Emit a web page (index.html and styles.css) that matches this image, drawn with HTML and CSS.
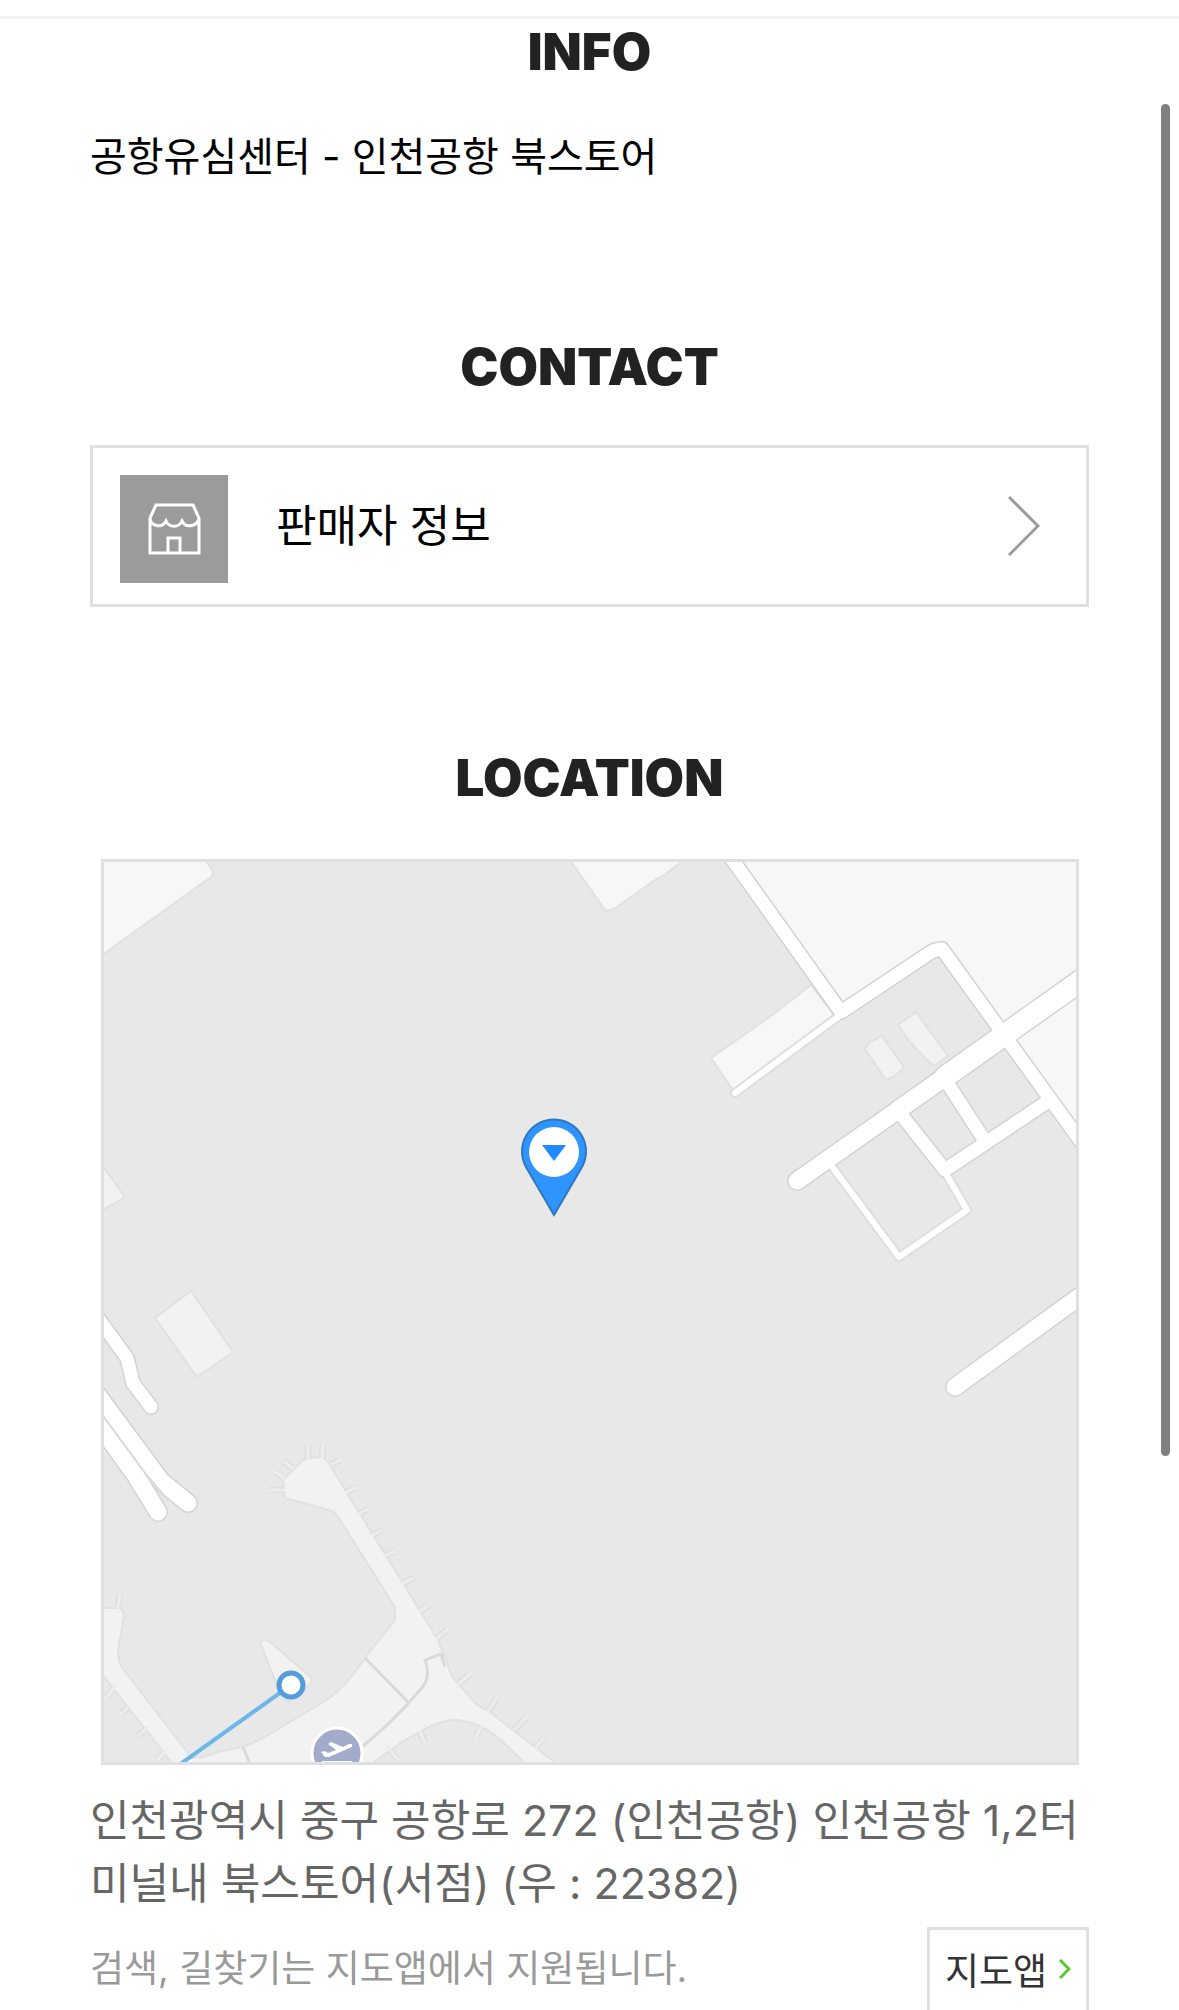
FILE: index.html
```html
<!DOCTYPE html>
<html lang="ko">
  <head>
    <meta charset="UTF-8" />
    <meta name="viewport" content="width=device-width, initial-scale=1" />
    <title>공항유심센터</title>
    <link rel="stylesheet" href="styles.css">
  </head>
  <body>
    <main class="page">
      <section class="info">
        <h2>INFO</h2>
        <p class="info-text">공항유심센터 - 인천공항 북스토어</p>
      </section>

      <section class="contact">
        <h2>CONTACT</h2>
        <a class="seller" href="#seller">
          <span class="seller-icon">
            <svg viewBox="0 0 108 108" fill="none" stroke="#fff" stroke-width="3">
              <path d="M30 43L36 30H73L79 43V78H30V43C30 51 42 54 46 46C49 53 59 53 62 46C66 54 78 51 79 43" />
              <path d="M48 78V63H60V78" />
            </svg>
          </span>
          <span class="seller-name">판매자 정보</span>
          <svg class="arrow" viewBox="0 0 32 60" fill="none" stroke="#9b9b9b" stroke-width="3">
            <path d="M1 1L30 30L1 59" />
          </svg>
        </a>
      </section>

      <section class="location">
        <h2>LOCATION</h2>
        <div class="map">
          <svg viewBox="104 862 972 900" role="img" aria-label="지도">
            <!-- ground areas -->
            <g class="area">
              <path d="M98 856H203L212 870Q214 874 211 877L137 930L98 958Z" />
              <path d="M567 856L603 907Q606 913 614 909L655 880L664 875L690 856Z" />
              <path d="M737 856L841 1012L930 952L943 948L1004 1035L1082 981V856Z" />
              <path d="M1004 1035L1082 981V1150Z" />
              <path d="M711 1058L775 1013L811 985L834 1015L733 1090Z" />
            </g>

            <!-- buildings -->
            <g class="building">
              <path d="M98 1159L125 1197L98 1213Z" />
              <path d="M191 1291L233 1352L197 1377L155 1318Z" />
              <path d="M865 1049L870 1042L882 1036L904 1067L895 1076L886 1080Z" />
              <path d="M898 1025L916 1012L948 1056L934 1066L925 1058L910 1042Z" />
              <path d="M260 1642Q264 1637 270 1642L312 1678L310 1685L288 1702L275 1680Z" />
            </g>
            <g class="gate-edge">
              <path id="gates" d="M308 1460V1445M322 1460L323 1445M330 1465L340 1460M345 1493L356 1487M357 1515L368 1509M371 1536L382 1530M384 1556L395 1551M402 1584L413 1578M419 1612L429 1605M436 1639L448 1629M456 1686L471 1673M488 1712L497 1697M514 1730L527 1717M535 1748L544 1738M294 1469L283 1461M285 1479L276 1472M285 1490H269M482 1725L476 1737M419 1730L425 1743M386 1745L397 1759M117 1612L120 1595M117 1684L107 1697M130 1705L121 1714M149 1726L138 1736M167 1750L157 1760" />
            </g>
            <g class="building">
              <path d="M98 1608H120Q124 1610 124 1617L118 1650Q118 1662 123 1669L192 1758L203 1757L222 1751L243 1747Q262 1740 290 1722L325 1701Q345 1688 365 1658L395 1620V1607L340 1520Q336 1512 329 1510L285 1498L283 1480L303 1460Q310 1457 323 1457L328 1462L347 1493L403 1583L438 1640L445 1657L452 1677L477 1705L490 1712L513 1730L562 1768H530L503 1742Q479 1720 453 1720Q440 1721 427 1728L400 1743L366 1768H176L98 1669Z" />
            </g>
            <use class="gate" href="#gates" />
            <path class="divider" d="M365 1658L409 1703M363 1746Q395 1720 420 1690Q432 1678 425 1660L441 1654L445 1667M243 1747L250 1764" />

            <!-- roads: casing first, then the white surface -->
            <path class="road thin-edge" d="M831 1165L899 1257L967 1210L945 1172M735 1093L839 1016" />
            <g class="road edge">
              <path stroke-width="16" d="M719 841L841 1012L928 954Q935 949 942 949L1004 1035L1090 1154M899 1112L945 1170L1047 1102M948 1084L983 1138M90 1307L127 1358L133 1383L151 1407" />
              <path stroke-width="20" d="M797 1181L898 1110M955 1387L1090 1289M90 1412L136 1476L158 1512M90 1385L161 1481L188 1503" />
              <path stroke-width="21" d="M898 1110L945 1077" />
              <path stroke-width="24" d="M945 1077L1100 967" />
            </g>
            <path class="road thin-fill" d="M831 1165L899 1257L967 1210L945 1172M735 1093L839 1016" />
            <g class="road fill">
              <path stroke-width="13" d="M719 841L841 1012L928 954Q935 949 942 949L1004 1035L1090 1154M899 1112L945 1170L1047 1102M948 1084L983 1138M90 1307L127 1358L133 1383L151 1407" />
              <path stroke-width="17" d="M797 1181L898 1110M955 1387L1090 1289M90 1412L136 1476L158 1512M90 1385L161 1481L188 1503" />
              <path stroke-width="18" d="M898 1110L945 1077" />
              <path stroke-width="21" d="M945 1077L1100 967" />
            </g>
            <path class="lane" d="M90 1398L148 1477L162 1493" />

            <!-- subway line and station -->
            <path d="M291 1685L172 1770" stroke="#6cb6ea" stroke-width="4" />
            <circle cx="291" cy="1685" r="12" fill="#fff" stroke="#549ddb" stroke-width="5" />

            <!-- airport symbol -->
            <circle cx="337" cy="1753" r="25" fill="#a2abcb" stroke="#fff" stroke-width="3" />
            <path fill="#fff" d="M321 1752L325 1751L328 1753L336 1750L328 1744L331 1742L343 1747L349 1744Q353 1743 352 1747L329 1757H325ZM322 1761H352V1762H322Z" />

            <!-- place pin -->
            <path d="M554 1215L526 1167A32 32 0 1 1 582 1167Z" fill="#2e94ff" stroke="#2f78bd" stroke-width="2" />
            <circle cx="554" cy="1152" r="25" fill="#fff" />
            <path d="M542 1145H566L554 1161Z" fill="#1f8bff" />
          </svg>
        </div>
        <p class="address">인천광역시 중구 공항로 272 (인천공항) 인천공항 1,2터미널내 북스토어(서점) (우 : 22382)</p>
        <div class="map-row">
          <p class="hint">검색, 길찾기는 지도앱에서 지원됩니다.</p>
          <button type="button" class="map-button">
            지도앱
            <svg viewBox="0 0 12 20" fill="none" stroke="#5ac92c" stroke-width="3">
              <path d="M1 1L10 10L1 19" />
            </svg>
          </button>
        </div>
      </section>
    </main>
    <div class="scroll-thumb"></div>
  </body>
</html>
```

FILE: styles.css
```css
* {
  box-sizing: border-box;
}

body {
  margin: 0;
  font-family: Inter, 'Noto Sans CJK KR', sans-serif;
  background: #fff;
  color: #000;
}

.page {
  height: 100vh;
  padding: 16px 90px 0;
  overflow: hidden auto;
  scrollbar-width: none;
}

h2 {
  margin: 0;
  font-size: 51px;
  font-weight: 900;
  line-height: 60px;
  text-align: center;
  color: #222;
}

p {
  margin: 0;
}

.info {
  margin: 0 -90px;
  padding: 3px 90px 0;
  border-top: 3px solid #f0f0f0;
}

.info-text {
  margin-top: 45px;
  font-size: 40px;
  line-height: 60px;
}

.contact {
  margin-top: 150px;
}

.seller {
  display: flex;
  align-items: center;
  margin-top: 48px;
  padding: 21px 46px 21px 27px;
  border: 3px solid #e0e0e0;
  color: #000;
  text-decoration: none;
}

.seller-icon {
  width: 108px;
  height: 108px;
  margin-top: 6px;
  background: #9b9b9b;
}

.seller-icon svg {
  display: block;
}

.seller-name {
  flex: 1;
  margin-left: 48px;
  font-size: 44px;
  line-height: 60px;
}

.arrow {
  width: 32px;
  height: 60px;
}

.location {
  margin-top: 141px;
}

.map {
  margin: 51px 10px 0 11px;
  border: 3px solid #e0e0e0;
  background: #e8e8e8;
}

.map svg {
  display: block;
  width: 100%;
}

.area {
  fill: #f7f7f7;
  stroke: #e1e1e1;
  stroke-width: 2;
}

.building {
  fill: #f2f2f2;
  stroke: #e1e1e1;
  stroke-width: 2;
}

.gate-edge {
  fill: none;
  stroke: #e0e0e0;
  stroke-width: 7;
}

.gate {
  fill: none;
  stroke: #ededed;
  stroke-width: 3;
}

.divider {
  fill: none;
  stroke: #dadada;
  stroke-width: 3;
}

.road {
  fill: none;
  stroke-linecap: round;
  stroke-linejoin: round;
}

.edge {
  stroke: #d3d3d3;
}

.fill {
  stroke: #fff;
}

.thin-edge {
  stroke: #dedede;
  stroke-width: 10;
}

.thin-fill {
  stroke: #fff;
  stroke-width: 6;
}

.lane {
  fill: none;
  stroke: #d9d9d9;
  stroke-width: 2;
}

.address {
  margin-top: 24px;
  font-size: 43px;
  line-height: 63px;
  color: #666;
  word-break: break-all;
}

.map-row {
  display: flex;
  justify-content: space-between;
  align-items: flex-start;
  margin-top: 12px;
}

.hint {
  font-size: 37px;
  line-height: 84px;
  color: #999;
}

.map-button {
  display: flex;
  align-items: center;
  gap: 12px;
  height: 90px;
  padding: 0 15px 6px;
  border: 3px solid #e0e0e0;
  background: #fff;
  font-family: inherit;
  font-size: 37px;
  color: #333;
}

.map-button svg {
  width: 12px;
  height: 20px;
}

.scroll-thumb {
  position: fixed;
  top: 104px;
  right: 9px;
  width: 9px;
  height: 1352px;
  border-radius: 5px;
  background: #7f7f7f;
}
```
